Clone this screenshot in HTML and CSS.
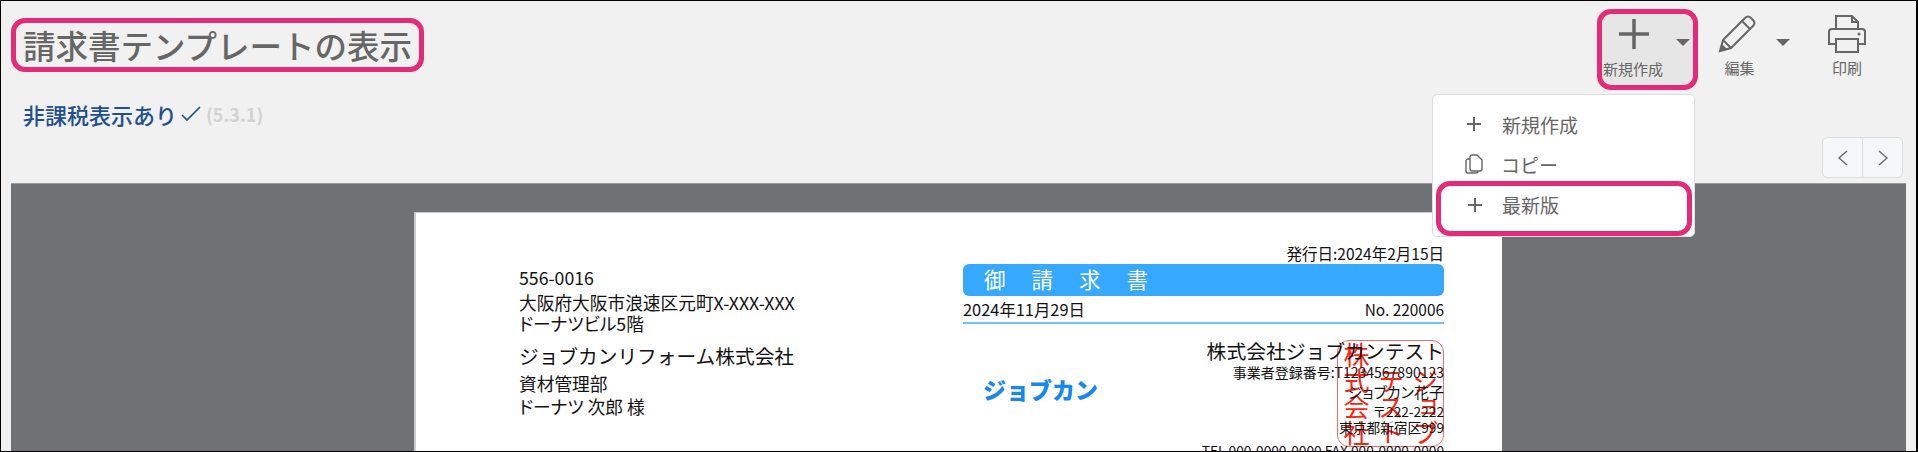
FILE: index.html
```html
<!DOCTYPE html>
<html lang="ja">

<head>
    <meta charset="UTF-8">
    <title>請求書テンプレートの表示</title>
    <link rel="stylesheet" href="styles.css">
</head>

<body>
    <div class="page">
        <header class="top">
            <h1 class="title">請求書テンプレートの表示</h1>
            <nav class="toolbar">
                <button class="tool tool-new">
                    <span class="tool-icon">
                        <svg width="32" height="32" viewBox="0 0 32 32"><path d="M16 1v30M1 16h30" class="ico-thick"/></svg>
                    </span>
                    <span class="tool-label">新規作成</span>
                    <i class="caret"></i>
                </button>
                <button class="tool tool-edit">
                    <span class="tool-icon">
                        <svg width="40" height="40" viewBox="0 0 40 40"><path d="M3 37l3-11L28 4c2-2 4-2 6 0l2 2c2 2 2 4 0 6L14 34zM6 26l8 8M25 7l8 8M4 33l3 3" class="ico"/><path d="M3 37l2-7 5 5z" class="ico-fill"/></svg>
                    </span>
                    <span class="tool-label">編集</span>
                    <i class="caret"></i>
                </button>
                <button class="tool tool-print">
                    <span class="tool-icon">
                        <svg width="40" height="40" viewBox="0 0 40 40"><path d="M9 15V2h16l6 6v7M25 2v6h6M9 30H2V18c0-2 1-3 3-3h30c2 0 3 1 3 3v12h-7M9 25h22v13H9z" class="ico"/><circle cx="32" cy="20" r="1.5" class="ico-fill"/></svg>
                    </span>
                    <span class="tool-label">印刷</span>
                </button>

                <ul class="menu">
                    <li class="menu-item">
                        <svg width="16" height="16" viewBox="0 0 16 16"><path d="M8 1v14M1 8h14" class="ico"/></svg>
                        <span>新規作成</span>
                    </li>
                    <li class="menu-item">
                        <svg width="18" height="20" viewBox="0 0 18 20"><path d="M5 3c0-1 1-2 2-2h5l5 5v9c0 1-1 2-2 2H7c-1 0-2-1-2-2zM5 5H3C2 5 1 6 1 7v10c0 1 1 2 2 2h8c1 0 2-1 2-2" class="ico-thin"/></svg>
                        <span>コピー</span>
                    </li>
                    <li class="menu-item menu-mark">
                        <svg width="16" height="16" viewBox="0 0 16 16"><path d="M8 1v14M1 8h14" class="ico"/></svg>
                        <span>最新版</span>
                    </li>
                </ul>
            </nav>
        </header>

        <p class="status">非課税表示あり <svg width="20" height="16" viewBox="0 0 20 16"><path d="M1 9l5 5L19 1" class="ico-blue"/></svg> <span class="version">(5.3.1)</span></p>

        <div class="pager-row">
            <div class="pager">
                <button class="pager-btn"><svg width="10" height="16" viewBox="0 0 10 16"><path d="M9 1L1 8l8 7" class="ico-thin"/></svg></button>
                <button class="pager-btn"><svg width="10" height="16" viewBox="0 0 10 16"><path d="M1 1l8 7-8 7" class="ico-thin"/></svg></button>
            </div>
        </div>

        <main class="viewer">
            <article class="paper">
                <section class="to">
                    <p class="to-zip">556-0016</p>
                    <p class="to-addr">大阪府大阪市浪速区元町X-XXX-XXX</p>
                    <p class="to-addr to-kana">ドーナツビル5階</p>
                    <p class="to-company">ジョブカンリフォーム株式会社</p>
                    <p class="to-dept">資材管理部</p>
                    <p class="to-name to-kana">ドーナツ 次郎 様</p>
                </section>

                <section class="doc">
                    <p class="issued">発行日:2024年2月15日</p>
                    <h2 class="doc-title">御請求書</h2>
                    <div class="doc-meta">
                        <span class="meta-date">2024年11月29日</span>
                        <span class="meta-no">No. 220006</span>
                    </div>
                    <div class="sender">
                        <div class="logo">ジョブカン</div>
                        <div class="sender-info">
                            <div class="stamp">
                                <span class="stamp-col">株式会社</span>
                                <span class="stamp-col">テスト</span>
                                <span class="stamp-col">ジョブ</span>
                            </div>
                            <p class="sender-name">株式会社ジョブカンテスト</p>
                            <p class="sender-reg">事業者登録番号:T1234567890123</p>
                            <p class="sender-person">ジョブカン花子</p>
                            <p class="sender-zip">〒222-2222</p>
                            <p class="sender-addr">東京都新宿区999</p>
                            <p class="sender-tel">TEL 000-0000-0000 FAX 000-0000-0000</p>
                        </div>
                    </div>
                </section>
            </article>
        </main>
    </div>
</body>

</html>
```

FILE: styles.css
```css
* {
    box-sizing: border-box;
}

body {
    margin: 0;
    font-family: "Noto Sans CJK JP", "Noto Sans", sans-serif;
    background-color: #f1f1f1;
}

p,
h1,
h2,
ul {
    margin: 0;
    padding: 0;
}

button {
    border: none;
    padding: 0;
    background: none;
    font-family: inherit;
}

.page {
    width: 1918px;
    height: 452px;
    overflow: hidden;
    border: 1px solid #000;
    border-right-width: 2px;
    background-color: #f1f1f1;
}

/* top row */
.top {
    display: flex;
    justify-content: space-between;
    align-items: flex-start;
    height: 99px;
    padding: 8px 0 0 10px;
}

.title {
    margin-top: 9px;
    padding: 0 7px;
    height: 54px;
    border: 5px solid #e52b78;
    border-radius: 14px;
    font-size: 32.5px;
    line-height: 43px;
    font-weight: 500;
    color: #666;
    white-space: nowrap;
}

.toolbar {
    position: relative;
    display: flex;
    margin-right: 41px;
}

.tool {
    position: relative;
    width: 101px;
    height: 81px;
    color: #666;
}

.tool-new {
    margin-right: 2px;
    border: 5px solid #e52b78;
    border-radius: 14px;
    background-color: #e6e6e6;
}

.tool-edit {
    width: 103px;
}

.tool-print {
    width: 72px;
}

.tool-icon {
    position: absolute;
    display: block;
    line-height: 0;
}

.tool-new .tool-icon {
    left: 16px;
    top: 4px;
}

.tool-edit .tool-icon {
    left: 17px;
    top: 5px;
}

.tool-print .tool-icon {
    left: 24px;
    top: 5px;
}

.tool-label {
    position: absolute;
    left: 0;
    right: 0;
    top: 48px;
    font-size: 15px;
    line-height: 22px;
    text-align: center;
}

.tool-new .tool-label {
    right: 29px;
    left: 0;
    top: 44px;
}

.tool-edit .tool-label {
    right: 24px;
}

.tool-print .tool-label {
    left: 16px;
}

.caret {
    position: absolute;
    right: 3px;
    top: 25px;
    width: 0;
    height: 0;
    border-left: 7px solid transparent;
    border-right: 7px solid transparent;
    border-top: 7px solid #666;
}

.tool-edit .caret {
    right: 13px;
    top: 30px;
}

.ico,
.ico-thick,
.ico-thin,
.ico-blue {
    fill: none;
    stroke: #666;
    stroke-width: 2;
}

.ico-thick {
    stroke-width: 3.5;
}

.ico-thin {
    stroke-width: 1.4;
}

.ico-blue {
    stroke: #1f4f8f;
    stroke-width: 1.6;
}

.ico-fill {
    fill: #666;
}

/* dropdown */
.menu {
    position: absolute;
    left: -165px;
    top: 85px;
    width: 263px;
    height: 143px;
    padding-top: 9px;
    list-style: none;
    border: 1px solid #ddd;
    border-radius: 5px;
    background-color: #fff;
    z-index: 2;
}

.menu-item {
    display: flex;
    align-items: center;
    height: 40px;
    padding-left: 33px;
    font-size: 19px;
    color: #666;
}

.menu-item svg {
    flex: none;
    margin-right: 20px;
}

.menu-item:nth-child(2) svg {
    margin: 0 18px 0 -1px;
}

.menu-mark {
    height: 55px;
    margin: -3px 2px 0 3px;
    padding: 0 0 8px 27px;
    border: 5px solid #e52b78;
    border-radius: 14px;
    background-color: #fff;
}

.menu-mark svg {
    margin-left: -1px;
    margin-right: 19px;
}

/* status */
.status {
    display: flex;
    align-items: center;
    gap: 4px;
    height: 28px;
    padding-left: 22px;
    font-size: 22px;
    font-weight: 500;
    color: #1f4f8f;
}

.version {
    margin-left: 1px;
    font-size: 18px;
    font-weight: 700;
    color: #d2d2d2;
}

.pager-row {
    display: flex;
    justify-content: flex-end;
    height: 55px;
    padding: 9px 13px 0 0;
}

.pager {
    display: flex;
    width: 81px;
    height: 41px;
    border: 1px solid #ddd;
    border-radius: 5px;
    background-color: #f4f7f8;
}

.pager-btn {
    flex: 1;
    display: flex;
    align-items: center;
    justify-content: center;
}

.pager-btn + .pager-btn {
    border-left: 1px solid #ddd;
}

/* document area */
.viewer {
    height: 280px;
    margin: 0 10px;
    padding: 28px 0 0 403px;
    border-top: 1px solid #999;
    background-color: #6f7274;
}

.paper {
    display: flex;
    width: 1088px;
    height: 300px;
    padding: 30px 0 0 103px;
    border-top: 1px solid #ccc;
    border-left: 2px solid #ccc;
    background-color: #fff;
    color: #111;
}

.to {
    width: 444px;
    padding-top: 24px;
}

.to-zip,
.to-addr,
.to-dept,
.to-name {
    font-size: 17.7px;
    line-height: 20px;
}

.to-zip {
    line-height: 21px;
    margin-bottom: 4px;
}

.to-kana {
    font-feature-settings: "palt";
}

.to-addr + .to-kana {
    margin-top: 1px;
}

.to-company {
    margin-top: 9px;
    font-size: 19.7px;
    line-height: 28px;
}

.to-dept {
    margin-top: 3px;
    line-height: 21px;
}

.to-name {
    margin-top: 2px;
    line-height: 21px;
}

.doc {
    width: 481px;
}

.issued {
    font-size: 15.5px;
    line-height: 21px;
    text-align: right;
}

.doc-title {
    height: 32px;
    padding-left: 21px;
    border-radius: 6px;
    background-color: #36a9ff;
    font-size: 21.5px;
    line-height: 30px;
    font-weight: 400;
    letter-spacing: 26px;
    color: #fff;
}

.doc-meta {
    display: flex;
    justify-content: space-between;
    height: 26px;
    margin-top: 2px;
    border-bottom: 2px solid #6cc4ff;
    line-height: 22px;
}

.meta-date {
    font-size: 16.4px;
}

.meta-no {
    font-size: 15.4px;
}

.sender {
    display: flex;
    justify-content: space-between;
    margin-top: 16px;
}

.logo {
    margin: 33px 0 0 20px;
    font-size: 23px;
    line-height: 32px;
    font-weight: 900;
    color: #1487f0;
}

.sender-info {
    position: relative;
    text-align: right;
    white-space: nowrap;
}

.stamp {
    position: absolute;
    right: 0;
    top: 0;
    display: flex;
    justify-content: space-between;
    width: 107px;
    height: 107px;
    padding: 0 3px;
    border: 1px solid #f66;
    border-radius: 12px;
}

.stamp-col {
    writing-mode: vertical-rl;
    font-size: 26px;
    line-height: 30px;
    color: #f21;
}

.sender-name,
.sender-reg,
.sender-person,
.sender-zip,
.sender-addr,
.sender-tel {
    position: relative;
}

.sender-name {
    font-size: 19.8px;
    line-height: 22px;
}

.sender-reg {
    font-size: 14px;
    line-height: 20px;
}

.sender-person {
    font-size: 15px;
    line-height: 19px;
    font-feature-settings: "palt";
}

.sender-zip {
    font-size: 13.7px;
    line-height: 20px;
}

.sender-addr {
    margin-top: -2px;
    font-size: 13.7px;
    line-height: 17px;
}

.sender-tel {
    margin-top: 4px;
    font-size: 13.7px;
    line-height: 20px;
}
```
